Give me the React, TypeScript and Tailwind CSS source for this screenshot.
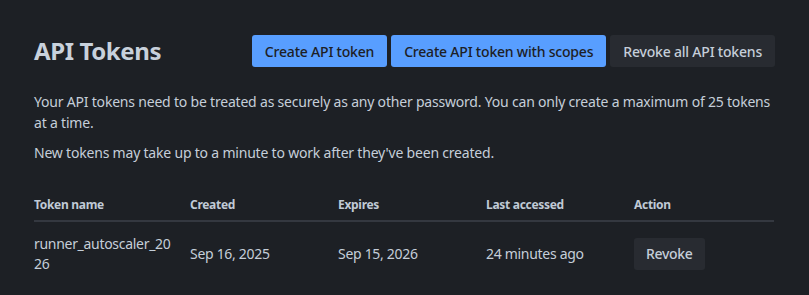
import React from "react";

export default function App() {
  const font = { fontFamily: '"Noto Sans", "Open Sans", sans-serif' };
  return (
    <div className="w-[809px] h-[295px] bg-[#1d2025] text-[#c5ced9] px-[34px] pt-[35px] overflow-hidden tracking-[-0.3px]" style={font}>
      <div className="flex items-center justify-between h-[32px]">
        <h1 className="text-[24px] font-bold text-[#c8d1dc] leading-none tracking-[-0.4px]">API Tokens</h1>
        <div className="flex gap-[4px]">
          <button className="h-[32px] px-[13px] rounded-[3px] bg-[#589eff] text-[#1d2025] text-[14px] font-medium tracking-[-0.2px]">Create API token</button>
          <button className="h-[32px] px-[13px] rounded-[3px] bg-[#589eff] text-[#1d2025] text-[14px] font-medium tracking-[-0.2px]">Create API token with scopes</button>
          <button className="h-[32px] px-[13px] rounded-[3px] bg-[#282b31] text-[#c5ced9] text-[14px] font-medium tracking-[-0.2px]">Revoke all API tokens</button>
        </div>
      </div>
      <p className="mt-[24px] text-[14px] leading-[21px] tracking-[-0.2px]">
        Your API tokens need to be treated as securely as any other password. You can only create a maximum of 25 tokens at a time.
      </p>
      <p className="mt-[9px] text-[14px] leading-[21px] tracking-[-0.2px]">
        New tokens may take up to a minute to work after they've been created.
      </p>
      <div className="mt-[34px] w-[740px]">
        <div className="grid grid-cols-[156px_148px_148px_148px_1fr] text-[12px] font-bold leading-[16px] pb-[7px] border-b-2 border-[#343840] text-[#c0cad6]">
          <div>Token name</div>
          <div>Created</div>
          <div>Expires</div>
          <div>Last accessed</div>
          <div>Action</div>
        </div>
        <div className="grid grid-cols-[156px_148px_148px_148px_1fr] items-center text-[14px] leading-[20px] pt-[12px]">
          <div className="pr-[12px] break-all">runner_autoscaler_2026</div>
          <div>Sep 16, 2025</div>
          <div>Sep 15, 2026</div>
          <div>24 minutes ago</div>
          <div>
            <button className="h-[32px] px-[12px] rounded-[3px] bg-[#282b31] text-[#c5ced9] text-[14px] font-medium">Revoke</button>
          </div>
        </div>
      </div>
    </div>
  );
}
